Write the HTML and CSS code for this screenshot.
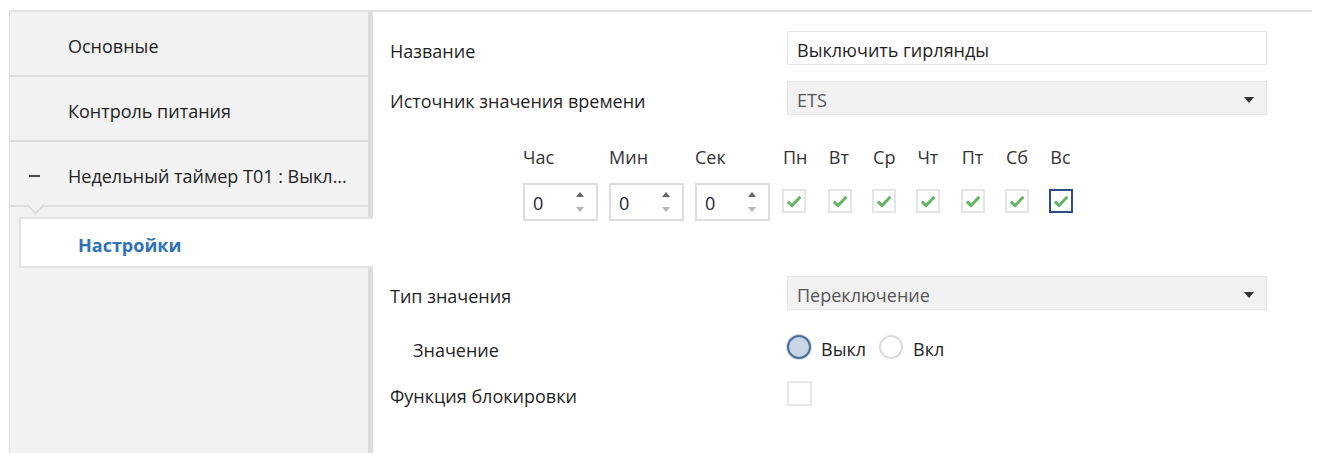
FILE: index.html
```html
<!DOCTYPE html>
<html lang="ru">
<head>
<meta charset="utf-8">
<title>Недельный таймер T01</title>
<link rel="stylesheet" href="styles.css">
</head>
<body>
<div class="window">
  <nav class="sidebar">
    <div class="nav-item">Основные</div>
    <div class="nav-item">Контроль питания</div>
    <div class="nav-item nav-group"><span class="collapse"></span>Недельный таймер T01 : Выкл...</div>
    <div class="nav-sub">Настройки</div>
  </nav>

  <main class="content">
    <div class="row">
      <span class="label">Название</span>
      <div class="field text-field">Выключить гирлянды</div>
    </div>
    <div class="row row-ets">
      <span class="label">Источник значения времени</span>
      <div class="field select">ETS<span class="caret"></span></div>
    </div>

    <div class="time">
      <div class="cell spin-cell">
        <span class="cell-label">Час</span>
        <div class="spinner"><span class="spin-value">0</span><span class="spin-arrows"><i class="up"></i><i class="down"></i></span></div>
      </div>
      <div class="cell spin-cell">
        <span class="cell-label">Мин</span>
        <div class="spinner"><span class="spin-value">0</span><span class="spin-arrows"><i class="up"></i><i class="down"></i></span></div>
      </div>
      <div class="cell spin-cell">
        <span class="cell-label">Сек</span>
        <div class="spinner"><span class="spin-value">0</span><span class="spin-arrows"><i class="up"></i><i class="down"></i></span></div>
      </div>
      <div class="days">
        <div class="cell day"><span class="cell-label">Пн</span><span class="check"><svg viewBox="0 0 20 20"><path d="M3.8 10.6 L8 14.6 L16.4 5.8"/></svg></span></div>
        <div class="cell day"><span class="cell-label">Вт</span><span class="check"><svg viewBox="0 0 20 20"><path d="M3.8 10.6 L8 14.6 L16.4 5.8"/></svg></span></div>
        <div class="cell day"><span class="cell-label">Ср</span><span class="check"><svg viewBox="0 0 20 20"><path d="M3.8 10.6 L8 14.6 L16.4 5.8"/></svg></span></div>
        <div class="cell day"><span class="cell-label">Чт</span><span class="check"><svg viewBox="0 0 20 20"><path d="M3.8 10.6 L8 14.6 L16.4 5.8"/></svg></span></div>
        <div class="cell day"><span class="cell-label">Пт</span><span class="check"><svg viewBox="0 0 20 20"><path d="M3.8 10.6 L8 14.6 L16.4 5.8"/></svg></span></div>
        <div class="cell day"><span class="cell-label">Сб</span><span class="check"><svg viewBox="0 0 20 20"><path d="M3.8 10.6 L8 14.6 L16.4 5.8"/></svg></span></div>
        <div class="cell day"><span class="cell-label">Вс</span><span class="check focused"><svg viewBox="0 0 20 20"><path d="M3.8 10.6 L8 14.6 L16.4 5.8"/></svg></span></div>
      </div>
    </div>

    <div class="row row-type">
      <span class="label">Тип значения</span>
      <div class="field select">Переключение<span class="caret"></span></div>
    </div>
    <div class="row row-value">
      <span class="label sub-label">Значение</span>
      <div class="radios">
        <span class="radio selected"></span><span class="radio-text">Выкл</span>
        <span class="radio"></span><span class="radio-text">Вкл</span>
      </div>
    </div>
    <div class="row row-lock">
      <span class="label">Функция блокировки</span>
      <div><span class="box"></span></div>
    </div>
  </main>
</div>
</body>
</html>
```

FILE: styles.css
```css
* { box-sizing: border-box; }

html, body { height: 100%; }

body {
  margin: 0;
  background: #ffffff;
  color: #1f1f1f;
  font-family: "Open Sans", "Noto Sans", "DejaVu Sans", sans-serif;
  font-size: 18px;
  overflow: hidden;
}

.window {
  display: flex;
  width: 1303px;
  height: calc(100% - 10px);
  margin: 10px 0 0 9px;
  border-top: 2px solid #e2e2e2;
}

/* ---- left navigation ---- */
.sidebar {
  flex: 0 0 364px;
  display: flex;
  flex-direction: column;
  background: #f2f2f2;
  border-left: 1px solid #dadada;
  border-right: 5px solid #dcdcdc;
}

.nav-item {
  position: relative;
  display: flex;
  align-items: center;
  height: 65px;
  padding: 5px 0 0 58px;
  border-bottom: 2px solid #dddddd;
  color: #222;
}

.nav-group { padding-left: 19px; }

.collapse {
  width: 11px;
  height: 2px;
  margin-right: 28px;
  background: #4a4a4a;
}

/* little notch under the expanded group */
.nav-group::after {
  content: "";
  position: absolute;
  left: 19px;
  bottom: -7px;
  width: 11px;
  height: 11px;
  background: #f2f2f2;
  border-right: 2px solid #dddddd;
  border-bottom: 2px solid #dddddd;
  transform: rotate(45deg);
}

.nav-sub {
  display: flex;
  align-items: center;
  height: 51px;
  margin: 10px -5px 0 9px;
  padding: 4px 0 0 57px;
  background: #ffffff;
  border: 2px solid #e3e3e3;
  border-right: none;
  color: #2f72b6;
  font-weight: 700;
}

/* ---- parameter pane ---- */
.content {
  flex: 1;
  padding: 19px 0 0 17px;
}

.row {
  display: grid;
  grid-template-columns: 397px 480px;
  align-items: center;
  height: 34px;
}

.row-ets { margin-top: 16px; }
.row-type { margin-top: 55px; }
.row-value { margin-top: 20px; }
.row-lock { margin-top: 13px; height: 32px; }

.label {
  padding-top: 5px;
  color: #1f1f1f;
}
.sub-label { padding-left: 23px; }

.field {
  display: flex;
  align-items: center;
  height: 34px;
  padding: 3px 0 0 9px;
}

.text-field {
  background: #ffffff;
  border: 1px solid #e3e3e3;
  color: #1f1f1f;
}

.select {
  position: relative;
  background: #f2f2f2;
  border: 1px solid #e6e6e6;
  color: #555555;
}

.caret {
  position: absolute;
  right: 12px;
  top: 15px;
  width: 0;
  height: 0;
  border-left: 5px solid transparent;
  border-right: 5px solid transparent;
  border-top: 6px solid #333333;
}

/* ---- time and weekdays ---- */
.time {
  display: flex;
  margin: 30px 0 0 133px;
}

.cell {
  display: flex;
  flex-direction: column;
  align-items: flex-start;
}

.spin-cell { margin-right: 11px; }

.cell-label {
  height: 24px;
  line-height: 24px;
  margin-bottom: 14px;
  color: #333333;
}

.spinner {
  display: flex;
  align-items: center;
  justify-content: space-between;
  width: 75px;
  height: 38px;
  padding: 2px 12px 0 8px;
  border: 2px solid #dddddd;
}

.spin-value { color: #1d1d3a; }

.spin-arrows {
  display: flex;
  flex-direction: column;
  gap: 10px;
  margin-top: -2px;
}

.spin-arrows i {
  display: block;
  width: 0;
  height: 0;
  border-left: 4px solid transparent;
  border-right: 4px solid transparent;
}

.spin-arrows .up { border-bottom: 5px solid #666666; }
.spin-arrows .down { border-top: 5px solid #b4b4b4; }

.days {
  display: flex;
  gap: 20.3px;
  margin-left: 1px;
}

.day .cell-label {
  padding-left: 1px;
  margin-bottom: 20px;
}

.check {
  display: block;
  width: 24px;
  height: 24px;
  background: #ffffff;
  border: 2px solid #e4e4e4;
}

.check svg {
  display: block;
  width: 20px;
  height: 20px;
}

.check path {
  fill: none;
  stroke: #68b468;
  stroke-width: 3;
  stroke-linejoin: round;
}

.check.focused { border-color: #2d4f7c; }

/* ---- radio buttons and checkbox ---- */
.radios {
  display: flex;
  align-items: center;
}

.radio {
  width: 24px;
  height: 24px;
  border-radius: 50%;
  border: 2px solid #dcdcdc;
  background: #ffffff;
}

.radio.selected {
  border: 2px solid #4a6f9a;
  background: #c8d6e6;
  box-shadow: 0 0 0 1px #dddddd;
}

.radio-text {
  margin: 0 13px 0 10px;
  padding-top: 3px;
  color: #1f1f1f;
}

.box {
  display: block;
  width: 25px;
  height: 25px;
  border: 2px solid #e6e6e6;
  background: #ffffff;
}
```
